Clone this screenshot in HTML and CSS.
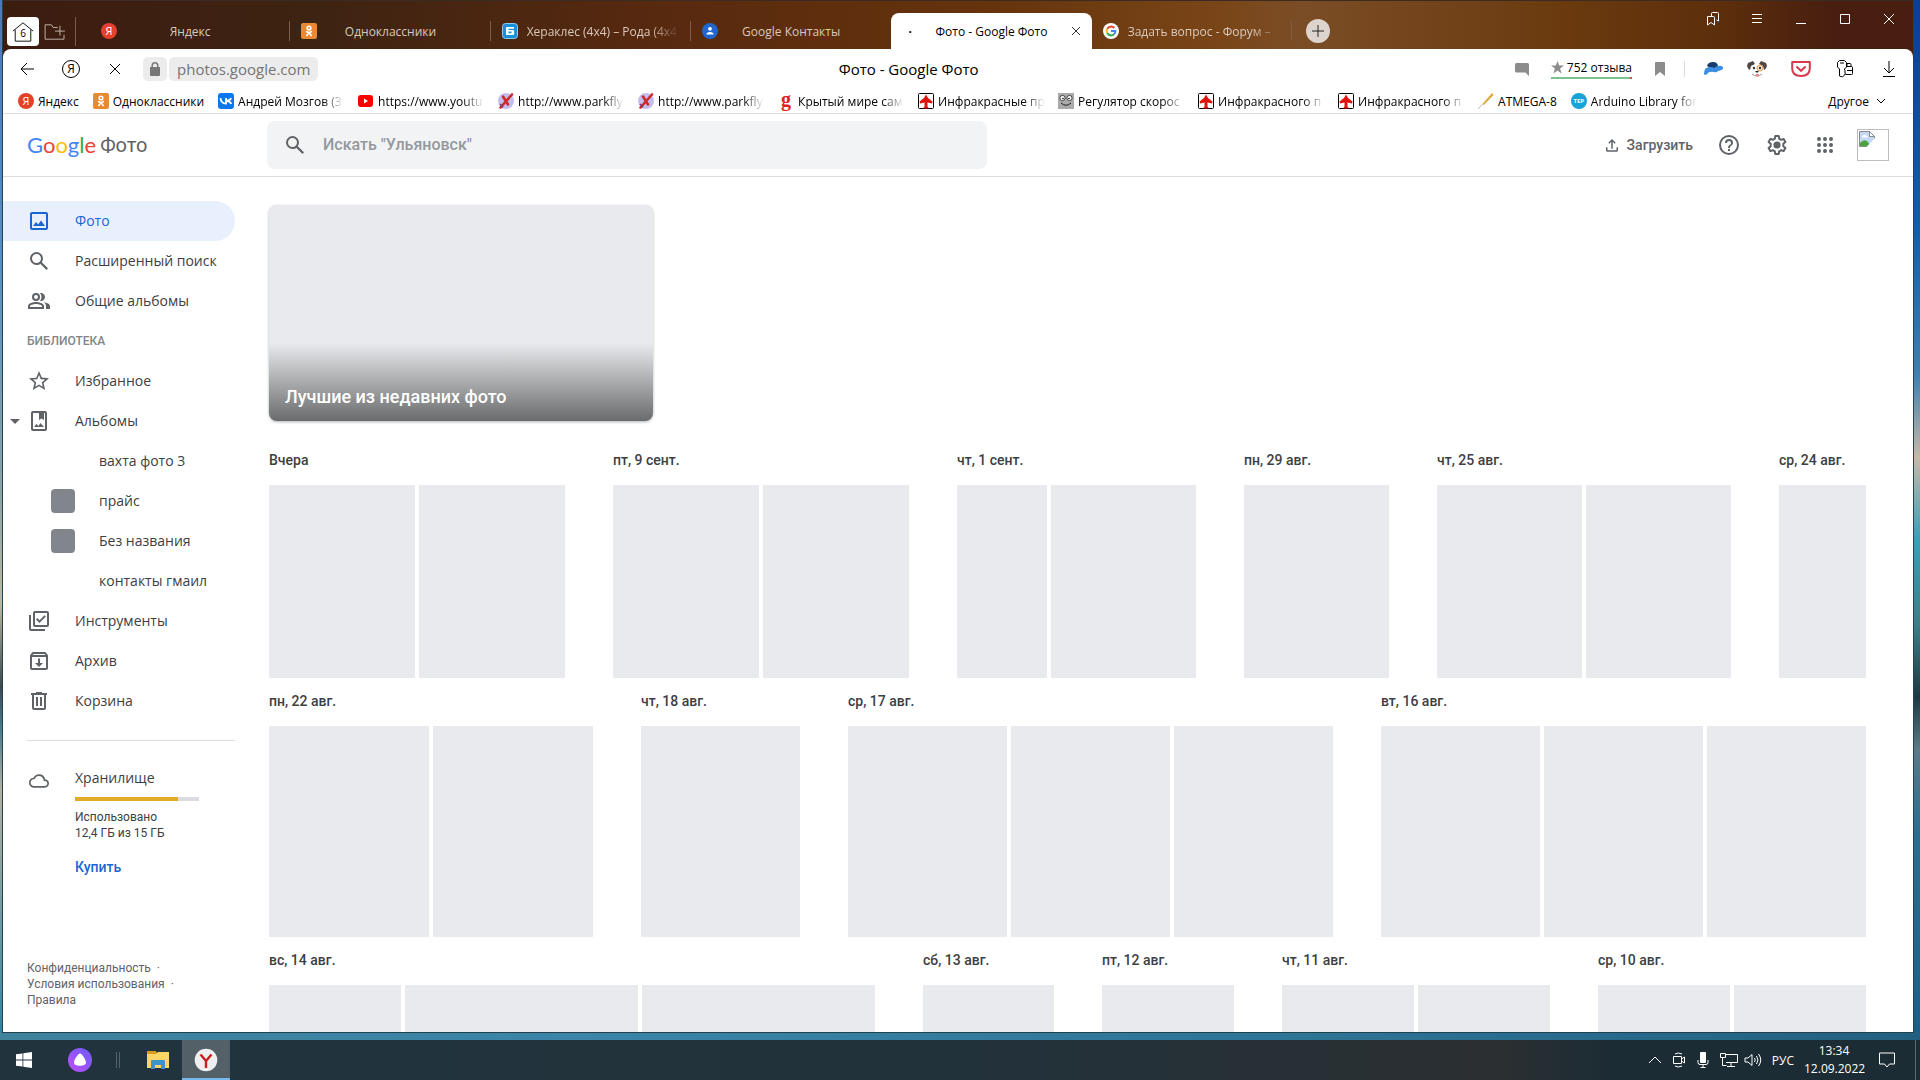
FILE: index.html
```html
<!DOCTYPE html>
<html lang="ru">
<head>
<meta charset="utf-8">
<title>Фото - Google Фото</title>
<link rel="stylesheet" href="styles.css">
</head>
<body>
<svg class="sprite" aria-hidden="true">
  <symbol id="i-search" viewBox="0 0 24 24"><path d="M20.49 19l-5.73-5.73A6.96 6.96 0 0 0 16 9.5 6.5 6.5 0 1 0 9.5 16c1.61 0 3.09-.59 4.23-1.57L19.49 20.2zM5 9.5a4.5 4.5 0 1 1 9 0 4.5 4.5 0 0 1-9 0z"/><path d="M14.3 13.2l6.6 6.4-1.4 1.4-6.5-6.5z"/></symbol>
  <symbol id="i-photo" viewBox="0 0 24 24"><path fill-rule="evenodd" d="M5 3h14a2 2 0 0 1 2 2v14a2 2 0 0 1-2 2H5a2 2 0 0 1-2-2V5c0-1.100.9-2 2-2zm0 2v14h14V5zm1 12l3-4 2.200 2.500L14 11.500 18 17z"/></symbol>
  <symbol id="i-people" viewBox="0 0 24 24"><path fill-rule="evenodd" d="M9 12a4 4 0 1 0 0-8 4 4 0 0 0 0 8zm0-6a2 2 0 1 1 0 4 2 2 0 0 1 0-4zm0 7c-2.670 0-8 1.340-8 4v3h16v-3c0-2.660-5.330-4-8-4zm6 5H3v-1c0-.720 3.220-2 6-2s6 1.280 6 2zM14 4c2.200 0 4 1.800 4 4s-1.800 4-4 4c-.400 0-.700-.050-1-.150A6 6 0 0 0 14.500 8c0-1.500-.550-2.800-1.500-3.850.3-.1.6-.150 1-.150zM17 13.200c2.900.5 6 1.800 6 3.800v3h-4v-3c0-1.500-.8-2.800-2-3.800z"/></symbol>
  <symbol id="i-star" viewBox="0 0 24 24"><path d="M22 9.240l-7.190-.620L12 2 9.190 8.630 2 9.240l5.460 4.730L5.820 21 12 17.270 18.180 21l-1.630-7.030zM12 15.400l-3.760 2.270 1-4.280-3.320-2.880 4.380-.380L12 6.100l1.710 4.040 4.380.380-3.320 2.880 1 4.280z"/></symbol>
  <symbol id="i-album" viewBox="0 0 24 24"><path fill-rule="evenodd" d="M6 2h12a2 2 0 0 1 2 2v16a2 2 0 0 1-2 2H6a2 2 0 0 1-2-2V4c0-1.100.9-2 2-2zm0 2v16h12V4h-1v7l-2.500-1.500L12 11V4zm1 14l2.500-3.200 1.800 2.100 2.200-2.900L17 18z"/></symbol>
  <symbol id="i-tools" viewBox="0 0 24 24"><path fill-rule="evenodd" d="M8 2h12a2 2 0 0 1 2 2v12a2 2 0 0 1-2 2H8a2 2 0 0 1-2-2V4c0-1.100.9-2 2-2zm0 2v12h12V4zM2 6h2v14h14v2H4a2 2 0 0 1-2-2zm10.500 8L9 10.500l1.400-1.400 2.100 2.100 5-5L18.900 7.600z"/></symbol>
  <symbol id="i-archive" viewBox="0 0 24 24"><path fill-rule="evenodd" d="M5.600 3h12.800l2.600 3.200V19a2 2 0 0 1-2 2H5a2 2 0 0 1-2-2V6.200zM6.500 5l-.8 1h12.600l-.8-1zM5 8v11h14V8zm6 1.500h2V14h3l-4 4-4-4h3z"/></symbol>
  <symbol id="i-trash" viewBox="0 0 24 24"><path fill-rule="evenodd" d="M9 3h6v1h5v2h-1v13a2 2 0 0 1-2 2H7a2 2 0 0 1-2-2V6H4V4h5zM7 6v13h10V6zm2 2h2v9H9zm4 0h2v9h-2z"/></symbol>
  <symbol id="i-cloud" viewBox="0 0 24 24"><path d="M19.350 10.040A7.490 7.490 0 0 0 12 4C9.110 4 6.600 5.640 5.350 8.040A5.990 5.990 0 0 0 0 14c0 3.310 2.690 6 6 6h13c2.760 0 5-2.240 5-5 0-2.640-2.050-4.780-4.650-4.960zM19 18H6c-2.210 0-4-1.790-4-4 0-2.050 1.530-3.760 3.560-3.970l1.070-.110.5-.950A5.500 5.500 0 0 1 12 6c2.620 0 4.880 1.860 5.390 4.430l.3 1.500 1.530.110A2.980 2.980 0 0 1 22 15c0 1.650-1.350 3-3 3z"/></symbol>
  <symbol id="i-upload" viewBox="0 0 24 24"><path d="M4 15v4c0 1.100.9 2 2 2h12a2 2 0 0 0 2-2v-4h-2v4H6v-4zM7 9l1.400 1.400L11 7.800V17h2V7.800l2.600 2.600L17 9l-5-5z"/></symbol>
  <symbol id="i-help" viewBox="0 0 24 24"><path d="M11 18h2v-2h-2zm1-16a10 10 0 1 0 0 20 10 10 0 0 0 0-20zm0 18a8 8 0 1 1 0-16 8 8 0 0 1 0 16zm0-14a4 4 0 0 0-4 4h2a2 2 0 1 1 4 0c0 2-3 1.750-3 5h2c0-2.250 3-2.500 3-5a4 4 0 0 0-4-4z"/></symbol>
  <symbol id="i-gear" viewBox="0 0 24 24"><path fill="none" stroke="currentColor" stroke-width="2" stroke-linejoin="round" d="M10.300 3h3.400l.5 2.700 1.900 1.100 2.600-.9 1.700 3-2.100 1.800v2.600l2.100 1.800-1.700 3-2.600-.9-1.900 1.100-.5 2.700h-3.400l-.5-2.700-1.900-1.100-2.600.9-1.700-3 2.100-1.800v-2.600L3.600 8.900l1.700-3 2.600.9 1.900-1.100z"/><circle cx="12" cy="12" r="3.600"/></symbol>
  <symbol id="i-apps" viewBox="0 0 24 24"><path d="M6 8a2 2 0 1 0 0-4 2 2 0 0 0 0 4zm6 12a2 2 0 1 0 0-4 2 2 0 0 0 0 4zm-6 0a2 2 0 1 0 0-4 2 2 0 0 0 0 4zm0-6a2 2 0 1 0 0-4 2 2 0 0 0 0 4zm6 0a2 2 0 1 0 0-4 2 2 0 0 0 0 4zm4-8a2 2 0 1 0 4 0 2 2 0 0 0-4 0zm-4 2a2 2 0 1 0 0-4 2 2 0 0 0 0 4zm6 6a2 2 0 1 0 0-4 2 2 0 0 0 0 4zm0 6a2 2 0 1 0 0-4 2 2 0 0 0 0 4z"/></symbol>
  <symbol id="i-ok" viewBox="0 0 16 16"><rect width="16" height="16" rx="2" fill="#e98a33"/><g fill="none" stroke="#fff" stroke-width="1.600" stroke-linecap="round"><circle cx="8" cy="5" r="1.800"/><path d="M5.600 8.600q2.400 1.600 4.800 0M8 9.600l-2.200 2.900M8 9.600l2.200 2.900"/></g></symbol>
  <symbol id="i-plane" viewBox="0 0 16 16"><circle cx="8" cy="8" r="8" fill="#c4bdf0"/><path d="M14 1.500L2.500 14.500M5 3.500l5 8" fill="none" stroke="#cf2a2a" stroke-width="2.600" stroke-linecap="round"/><path d="M2 11l3 3.500" stroke="#7a3a7a" stroke-width="1.500"/></symbol>
  <symbol id="i-tree" viewBox="0 0 16 16"><rect x=".5" y=".5" width="15" height="15" rx="1" fill="#fff" stroke="#000"/><path d="M8 1.500l2 3.500 4.500 3.500-.5 2-4.500-1v4l1.500 2H5l1.500-2v-4L2 10.500l-.5-2L6 5z" fill="#e0140f"/></symbol>
</svg>

<div class="desktop">
<div class="window">
  <header class="tabstrip">
    <button class="home" aria-label="Вкладки"><svg viewBox="0 0 24 24" class="line"><path d="M1 11L12 2l11 9M3.500 9.500V22h17V9.500"/></svg><span class="home-count">6</span></button>
    <button class="group" aria-label="Новая группа"><svg viewBox="0 0 24 20" class="line"><path d="M15 5H10L8 2H1v16h21v-5M12 9h11M17.500 3v11"/></svg></button>
    <nav class="tabs">
      <a class="tab" href="#"><span class="ya">Я</span><span class="tab-title">Яндекс</span></a>
      <a class="tab" href="#"><svg class="fav"><use href="#i-ok"/></svg><span class="tab-title">Одноклассники</span></a>
      <a class="tab tab-long" href="#"><svg class="fav" viewBox="0 0 16 16"><rect x=".5" y=".5" width="15" height="15" rx="3" fill="#1c8fd6" stroke="#8ccaf0"/><path d="M4 4h8v1.800H6.500v1.200H11q1.200 0 1.200 1.200v2.600Q12.200 12 11 12H4zM6.500 8.600v1.600h3V8.600z" fill="#fff" fill-rule="evenodd"/></svg><span class="tab-title">Хераклес (4х4) – Рода (4х4</span></a>
      <a class="tab" href="#"><svg class="fav" viewBox="0 0 16 16"><circle cx="8" cy="8" r="8" fill="#1f66d0"/><circle cx="8" cy="5.800" r="1.900" fill="#fff"/><path d="M4.400 11.600q0-2.600 3.600-2.600t3.600 2.600z" fill="#fff"/></svg><span class="tab-title">Google Контакты</span></a>
      <a class="tab tab-active" href="#" aria-current="page"><span class="loading">·</span><span class="tab-title">Фото - Google Фото</span><svg class="tab-close line" viewBox="0 0 10 10"><path d="M1 1l8 8M9 1L1 9"/></svg></a>
      <a class="tab tab-long" href="#"><svg class="fav" viewBox="0 0 16 16"><circle cx="8" cy="8" r="8" fill="#fff"/><g fill="none" stroke-width="2"><path stroke="#ea4335" d="M4.200 5.800A4.500 4.500 0 0 1 11.300 5"/><path stroke="#fbbc05" d="M4.200 10.200a4.500 4.500 0 0 1 0-4.400"/><path stroke="#34a853" d="M11 11.300a4.500 4.500 0 0 1-6.800-1.100"/><path stroke="#4285f4" d="M8 8h4.400q0 2-1.400 3.300"/></g></svg><span class="tab-title">Задать вопрос - Форум –</span></a>
    </nav>
    <button class="newtab" aria-label="Новая вкладка"><svg viewBox="0 0 12 12" class="line"><path d="M6 0v12M0 6h12"/></svg></button>
    <div class="controls">
      <button aria-label="Коллекции"><svg viewBox="0 0 14 14" class="line"><path d="M1.500 4.500h6q1 0 1 1V13L5 10.500 1.500 13zM5.500 4V1.500q0-1 1-1h5q1 0 1 1V9L10.500 8"/></svg></button>
      <button aria-label="Меню"><svg viewBox="0 0 14 14" class="line"><path d="M2 2.500h10M2 6.500h10M2 10.500h10"/></svg></button>
      <button aria-label="Свернуть"><svg viewBox="0 0 14 14" class="line"><path d="M2 11.500h10"/></svg></button>
      <button aria-label="Развернуть"><svg viewBox="0 0 14 14" class="line"><path d="M2.500 2.500h9v9h-9z"/></svg></button>
      <button aria-label="Закрыть"><svg viewBox="0 0 14 14" class="line"><path d="M2 2l10 10M12 2L2 12"/></svg></button>
    </div>
  </header>

  <div class="browser">
  <div class="toolbar">
    <div class="tool-left">
      <button class="tool" aria-label="Назад"><svg viewBox="0 0 16 16" class="line"><path d="M15 8H2M8 2L2 8l6 6"/></svg></button>
      <button class="tool" aria-label="Яндекс"><span class="ya-ring">Я</span></button>
      <button class="tool" aria-label="Остановить"><svg viewBox="0 0 16 16" class="line"><path d="M3 3l10 10M13 3L3 13"/></svg></button>
      <button class="lock" aria-label="Защита"><svg viewBox="0 0 16 16"><path fill="#777" fill-rule="evenodd" d="M4.500 6V4.500a3.500 3.500 0 0 1 7 0V6H13v8q0 1-1 1H4q-1 0-1-1V6zM6 6h4V4.500a2 2 0 0 0-4 0z"/></svg></button>
      <button class="url">photos.google.com</button>
    </div>
    <div class="page-title">Фото - Google Фото</div>
    <div class="tool-right">
      <svg class="chat" viewBox="0 0 14 14"><path fill="#8c8c8c" d="M1.500 1h11Q14 1 14 2.500V14l-3.500-3.500h-9Q0 10.500 0 9V2.500Q0 1 1.500 1z"/></svg>
      <a class="reviews" href="#"><svg viewBox="0 0 12 12"><path fill="#8c8c8c" d="M6 0l1.500 4.200H12L8.400 6.900 9.700 11.500 6 8.700 2.300 11.500 3.600 6.900 0 4.200h4.500z"/></svg>752 отзыва</a>
      <svg class="mark" viewBox="0 0 12 16"><path fill="#8c8c8c" d="M2 1h8q1 0 1 1v13l-5-4-5 4V2q0-1 1-1z"/></svg>
      <span class="tool-sep"></span>
      <button class="tool" aria-label="Погода"><svg viewBox="0 0 20 16"><path d="M4 5q1-4 6-4t5 5l-4 3z" fill="#173d6b"/><path d="M1 13q0-8 7-7 2 0 3 1 5-4 9-1v2q-3 2-5 2-1 2-4 1-5-1-7 2-2 2-3 0z" fill="#3d8de0"/></svg></button>
      <button class="tool" aria-label="Пёс"><svg viewBox="0 0 20 16"><path d="M1 2l5-2 2 3-4 2-1 4Q1 8 0 5zM19 2l-5-2-2 3 4 2 1 4q2-1 3-4z" fill="#4d4643"/><circle cx="13" cy="7" r="3" fill="#fbe6cc" stroke="#e09c53"/><circle cx="7" cy="7" r="1.200" fill="#333"/><circle cx="13" cy="7" r="1.200" fill="#333"/><path d="M8 10h4l-2 2z" fill="#222"/><path d="M5 13q5 4 10 0" fill="none" stroke="#999"/><path d="M9 13h3v2q-1.500 1.500-3 0z" fill="#e88"/></svg></button>
      <button class="tool" aria-label="Pocket"><svg viewBox="0 0 20 16"><path d="M1.200 1h17.600v6.500q0 7.500-8.800 7.500T1.200 7.500z" fill="#fff" stroke="#d7394f" stroke-width="2" stroke-linejoin="round"/><path d="M6 6l4 3.800L14 6" fill="none" stroke="#d7394f" stroke-width="2" stroke-linecap="round"/></svg></button>
      <button class="tool" aria-label="Пароли"><svg viewBox="0 0 18 18" class="line keys"><path d="M3.500 16V9L1.500 7V2.500l2-2h5l2 2V7L8.500 9v1l1 1-1 1 1 1-1 2-2 2zM4 3h4M10.500 6.500h5q1 0 1 1v6q0 1-1 1h-6M11 6v-2.500h3q1 0 1 1V6M11 10.500h5"/></svg></button>
      <button class="tool" aria-label="Загрузки"><svg viewBox="0 0 16 16" class="line"><path d="M8 0v12M3 7l5 5 5-5M2 15.500h12"/></svg></button>
    </div>
  </div>

  <nav class="bookmarks">
    <a href="#"><span class="ya">Я</span><span>Яндекс</span></a>
    <a href="#"><svg class="fav"><use href="#i-ok"/></svg><span>Одноклассники</span></a>
    <a class="clip" href="#"><svg class="fav" viewBox="0 0 16 16"><rect width="16" height="16" rx="3" fill="#0a77ee"/><path fill="none" stroke="#fff" stroke-width="1.800" d="M2.500 5q.5 5.500 5.500 5.500V5M13 5q-.5 2.500-5 2.800 4 .2 5.300 3"/></svg><span>Андрей Мозгов (3</span></a>
    <a class="clip" href="#"><svg class="fav" viewBox="0 0 16 16"><rect y="2" width="15" height="12" rx="3" fill="#f00"/><path d="M6 5.500v5L10 8z" fill="#fff"/></svg><span>https://www.youtu</span></a>
    <a class="clip" href="#"><svg class="fav"><use href="#i-plane"/></svg><span>http://www.parkfly</span></a>
    <a class="clip" href="#"><svg class="fav"><use href="#i-plane"/></svg><span>http://www.parkfly</span></a>
    <a class="clip" href="#"><span class="fav fav-g">g</span><span>Крытый мире сам</span></a>
    <a class="clip" href="#"><svg class="fav"><use href="#i-tree"/></svg><span>Инфракрасные пр</span></a>
    <a class="clip" href="#"><svg class="fav" viewBox="0 0 16 16"><rect width="16" height="16" fill="#aaa"/><g fill="#fff" stroke="#222" stroke-width=".8"><circle cx="4.500" cy="5" r="2.600"/><circle cx="11.500" cy="5" r="2.600"/></g><circle cx="5" cy="5.500" r=".8"/><circle cx="11" cy="5.500" r=".8"/><path d="M3 10q5 4.500 10 0" fill="none" stroke="#222"/></svg><span>Регулятор скорос</span></a>
    <a class="clip" href="#"><svg class="fav"><use href="#i-tree"/></svg><span>Инфракрасного п</span></a>
    <a class="clip" href="#"><svg class="fav"><use href="#i-tree"/></svg><span>Инфракрасного п</span></a>
    <a href="#"><svg class="fav" viewBox="0 0 16 16"><path d="M14 0l1.500 2L6 12l-1.500-1z" fill="#e0a73c"/><path d="M5 10.500L0 16" stroke="#bbb"/></svg><span>ATMEGA-8</span></a>
    <a class="clip" href="#"><span class="fav fav-tep">TEP</span><span>Arduino Library for</span></a>
    <button class="other">Другое<svg viewBox="0 0 8 8" class="line"><path d="M0 2l4 4 4-4"/></svg></button>
  </nav>

  <div class="appbar">
    <a class="logo" href="#"><span class="google"><span class="c-b">G</span><span class="c-r">o</span><span class="c-y">o</span><span class="c-b">g</span><span class="c-g">l</span><span class="c-r">e</span></span><span class="product">Фото</span></a>
    <label class="search"><svg class="icon"><use href="#i-search"/></svg><input type="text" aria-label="Поиск" placeholder='Искать "Ульяновск"'></label>
    <div class="actions">
      <button class="upload"><svg><use href="#i-upload"/></svg>Загрузить</button>
      <button class="act" aria-label="Справка"><svg class="icon"><use href="#i-help"/></svg></button>
      <button class="act" aria-label="Настройки"><svg class="icon"><use href="#i-gear"/></svg></button>
      <button class="act" aria-label="Приложения"><svg class="icon"><use href="#i-apps"/></svg></button>
      <a class="avatar" href="#" aria-label="Аккаунт"><svg viewBox="0 0 16 16"><path d="M.5.500h10l5 5v10H.5z" fill="#c2d9f5" stroke="#8c8c8c"/><path d="M10.500.500v5h5z" fill="#fff" stroke="#8c8c8c"/><path d="M3 6q0-2 2-2 2-1 2.500 1Q9 5 9 6.500H3z" fill="#fff"/><path d="M1 15v-3q4-5 8-1l2 4z" fill="#4aa53c"/><path d="M16 7L7.500 16H16z" fill="#fff"/></svg></a>
    </div>
  </div>

  <div class="content">
    <aside class="sidebar">
      <nav class="side-nav">
        <a class="side side-on" href="#"><svg class="icon"><use href="#i-photo"/></svg>Фото</a>
        <a class="side" href="#"><svg class="icon"><use href="#i-search"/></svg>Расширенный поиск</a>
        <a class="side" href="#"><svg class="icon"><use href="#i-people"/></svg>Общие альбомы</a>
        <h2 class="side-head">Библиотека</h2>
        <a class="side" href="#"><svg class="icon"><use href="#i-star"/></svg>Избранное</a>
        <a class="side side-open" href="#"><svg class="icon"><use href="#i-album"/></svg>Альбомы</a>
        <a class="side side-sub" href="#"><span class="thumb thumb-none"></span>вахта фото 3</a>
        <a class="side side-sub" href="#"><span class="thumb"></span>прайс</a>
        <a class="side side-sub" href="#"><span class="thumb"></span>Без названия</a>
        <a class="side side-sub" href="#"><span class="thumb thumb-none"></span>контакты гмаил</a>
        <a class="side" href="#"><svg class="icon"><use href="#i-tools"/></svg>Инструменты</a>
        <a class="side" href="#"><svg class="icon"><use href="#i-archive"/></svg>Архив</a>
        <a class="side" href="#"><svg class="icon"><use href="#i-trash"/></svg>Корзина</a>
      </nav>
      <div class="storage">
        <svg class="icon cloud"><use href="#i-cloud"/></svg>
        <div class="storage-body">
          <div class="storage-title">Хранилище</div>
          <div class="bar"><div class="bar-fill" style="width:83%"></div></div>
          <div class="storage-used">Использовано<br>12,4 ГБ из 15 ГБ</div>
          <a class="buy" href="#">Купить</a>
        </div>
      </div>
      <footer class="legal"><a href="#">Конфиденциальность</a> &nbsp;·<br><a href="#">Условия использования</a> &nbsp;·<br><a href="#">Правила</a></footer>
    </aside>

    <main class="photos">
      <a class="memory" href="#"><span>Лучшие из недавних фото</span></a>
      <div class="row">
        <section class="day" style="flex-grow:296"><h3>Вчера</h3><div class="tiles"><i></i><i></i></div></section>
        <section class="day" style="flex-grow:296"><h3>пт, 9 сент.</h3><div class="tiles"><i></i><i></i></div></section>
        <section class="day" style="flex-grow:239"><h3>чт, 1 сент.</h3><div class="tiles"><i style="flex-grow:90"></i><i style="flex-grow:145"></i></div></section>
        <section class="day" style="flex-grow:145"><h3>пн, 29 авг.</h3><div class="tiles"><i></i></div></section>
        <section class="day" style="flex-grow:294"><h3>чт, 25 авг.</h3><div class="tiles"><i></i><i></i></div></section>
        <section class="day" style="flex-grow:87"><h3>ср, 24 авг.</h3><div class="tiles"><i></i></div></section>
      </div>
      <div class="row row-tall">
        <section class="day" style="flex-grow:324"><h3>пн, 22 авг.</h3><div class="tiles"><i></i><i></i></div></section>
        <section class="day" style="flex-grow:159"><h3>чт, 18 авг.</h3><div class="tiles"><i></i></div></section>
        <section class="day" style="flex-grow:485"><h3>ср, 17 авг.</h3><div class="tiles"><i></i><i></i><i></i></div></section>
        <section class="day" style="flex-grow:485"><h3>вт, 16 авг.</h3><div class="tiles"><i></i><i></i><i></i></div></section>
      </div>
      <div class="row">
        <section class="day" style="flex-grow:606"><h3>вс, 14 авг.</h3><div class="tiles"><i style="flex-grow:132"></i><i style="flex-grow:233"></i><i style="flex-grow:233"></i></div></section>
        <section class="day" style="flex-grow:131"><h3>сб, 13 авг.</h3><div class="tiles"><i></i></div></section>
        <section class="day" style="flex-grow:132"><h3>пт, 12 авг.</h3><div class="tiles"><i></i></div></section>
        <section class="day" style="flex-grow:268"><h3>чт, 11 авг.</h3><div class="tiles"><i></i><i></i></div></section>
        <section class="day" style="flex-grow:268"><h3>ср, 10 авг.</h3><div class="tiles"><i></i><i></i></div></section>
      </div>
    </main>
  </div>
  </div>
</div>
</div>

<footer class="taskbar">
  <button class="task" aria-label="Пуск"><svg viewBox="0 0 16 16" class="t16"><path fill="#fff" d="M0 2.300L6.500 1.400v6.200H0zM7.300 1.300L16 0v7.600H7.300zM0 8.400h6.500v6.200L0 13.700zM7.300 8.400H16V16l-8.700-1.300z"/></svg></button>
  <button class="task task-alice" aria-label="Алиса"><svg viewBox="0 0 24 24" class="t24"><defs><linearGradient id="alice" x1="1" y1="0" x2="0" y2="1"><stop offset="0" stop-color="#6a5cff"/><stop offset="1" stop-color="#c04df5"/></linearGradient></defs><circle cx="12" cy="12" r="12" fill="url(#alice)"/><path d="M12 5.500c2 0 6 6.500 6 9 0 2-2.500 3.300-6 3.300s-6-1.300-6-3.300c0-2.500 4-9 6-9z" fill="#fff"/></svg></button>
  <span class="task-sep"></span>
  <button class="task" aria-label="Проводник"><svg viewBox="0 0 22 18" class="t22"><path fill="#d99b1c" d="M0 0h9l1 2v4H0z"/><path fill="#fbd667" d="M0 3h9l2-2h11v16H0z"/><path fill="#3d94c9" d="M4 18V10q0-1 1-1h12q1 0 1 1v8h-4v-4H8v4z"/></svg></button>
  <button class="task task-on" aria-label="Яндекс Браузер"><svg viewBox="0 0 24 24" class="t24"><circle cx="12" cy="12" r="11.300" fill="#efefef"/><path d="M6.500 6.500l5.500 6.500 5.500-6.500M12 12.500V20" fill="none" stroke="#c8201c" stroke-width="2.400"/></svg></button>
  <div class="tray">
    <svg viewBox="0 0 14 14" class="line"><path d="M1 10l6-6 6 6"/></svg>
    <svg viewBox="0 0 14 16" class="line"><path d="M1.500 4.500h8v7h-8zM9.500 7l3-2v6l-3-2M3 2q3-2 7 0M3 14q3 2 7 0"/></svg>
    <svg viewBox="0 0 14 16" class="line"><rect x="4" y="0" width="6" height="11" rx="1" fill="#fff" stroke="none"/><path d="M2 8v2.500q0 2 2 2h6q2 0 2-2V8M7 12.500V15M4.500 15.500h5"/></svg>
    <svg viewBox="0 0 18 16" class="line wide"><path d="M5 2.500h12.500v8H6M11 10.500v4M7 14.500h8M.5 1.500h5v4h-5zM2.500 5.500v8h4"/></svg>
    <svg viewBox="0 0 18 16" class="line wide"><path d="M1 6v4h3l4 3.500v-11L4 6zM10.500 6q1.500 2 0 4M12.500 4q3 4 0 8M14.500 2q4.500 6 0 12"/></svg>
    <span class="lang">РУС</span>
    <time class="clock">13:34<br>12.09.2022</time>
    <svg viewBox="0 0 18 16" class="line note"><path d="M1.500 1h15v11h-5L9 15l-2.500-3h-5z"/></svg>
  </div>
</footer>
</body>
</html>
```
FILE: styles.css
```css
* { box-sizing: border-box; }
html, body { margin: 0; height: 100%; }
body {
  display: flex;
  flex-direction: column;
  height: 100vh;
  overflow: hidden;
  font-family: "Open Sans", "Noto Sans", sans-serif;
  font-size: 12px;
  color: #000;
}
a { color: inherit; text-decoration: none; }
button { border: 0; padding: 0; margin: 0; background: none; color: inherit; font: inherit; }
h2, h3 { margin: 0; }
svg { display: block; flex: none; }
.sprite { position: absolute; width: 0; height: 0; }
.line { fill: none; stroke: currentColor; stroke-width: 1; }
.icon { width: 24px; height: 24px; fill: currentColor; }
.fav { width: 16px; height: 16px; flex: none; }

.desktop {
  flex: 1;
  min-height: 0;
  display: flex;
  padding: 0 6px 7px 2px;
  background:
    linear-gradient(90deg, #3f829c, #3a85a8 30%, #2c7394 70%, #235f80) bottom / 100% 8px no-repeat,
    linear-gradient(#4a7ab5 0%, #5a8fc0 25%, #8fa5a5 48%, #c0b8a0 58%, #3c4a50 66%, #4d7a8c 70%, #b4b0a0 76%, #4f8ea0 95%, #2f7ea0 100%) left / 50% 100% no-repeat,
    linear-gradient(#0a3c9c 0%, #0f5fae 22%, #3d80b0 36%, #c8b8a8 44%, #35a0b8 52%, #3c7f88 60%, #1c3844 67%, #5a7a88 72%, #2c6e92 80%, #175f88 100%) right / 50% 100% no-repeat;
}
.window {
  flex: 1;
  min-width: 0;
  display: flex;
  flex-direction: column;
  border: 1px solid #22424f;
  border-top: 0;
  background: linear-gradient(90deg, #3d1c10 0%, #3d2312 16%, #57290f 34%, #66330c 52%, #7a4618 64%, #7b4d26 68%, #6a3a0e 82%, #5c2e0c 90%, #471e10 96%) top / 100% 60px no-repeat, #fff;
}

/* tab strip */
.tabstrip { display: flex; align-items: flex-start; height: 49px; padding-left: 4px; border-top: 1px solid #3a2c22; }
.home { display: grid; place-items: center; width: 32px; height: 29px; margin-top: 16px; border-radius: 4px; background: #fff; color: #000; }
.home > * { grid-area: 1 / 1; }
.home svg { width: 24px; height: 22px; }
.home-count { font-size: 10px; padding-top: 2px; }
.group { width: 37px; height: 29px; margin-top: 16px; padding-left: 5px; border-right: 1px solid #7c5d4c; color: #c9bcb2; }
.group svg { width: 22px; height: 18px; }
.tabs { display: flex; flex: 0 1 1216px; min-width: 0; margin-top: 12px; padding-left: 14px; }
.tab {
  flex: 1;
  min-width: 0;
  display: grid;
  grid-template-columns: 16px 1fr 16px;
  align-items: center;
  gap: 9px;
  height: 36px;
  padding: 0 11px;
  color: #d9c9bc;
  background: linear-gradient(#7c5d4c, #7c5d4c) right 8px / 1px 20px no-repeat;
}
.tab:nth-child(4) { background: none; }
.tab-long { grid-template-columns: 16px 1fr; }
.tab-title { text-align: center; white-space: nowrap; }
.tab-long .tab-title, .clip span:last-child {
  text-align: left;
  -webkit-mask-image: linear-gradient(90deg, #000 80%, transparent);
  mask-image: linear-gradient(90deg, #000 80%, transparent);
}
.tab-active { background: #fff; color: #000; border-radius: 8px 8px 0 0; }
.loading { text-align: center; font-weight: 700; }
.tab-close { width: 10px; height: 10px; justify-self: end; color: #333; }
.ya, .fav-tep {
  display: grid;
  place-items: center;
  flex: none;
  width: 16px;
  height: 16px;
  border-radius: 50%;
  background: #e5402a;
  color: #fff;
  font-size: 11px;
  line-height: 16px;
}
.newtab { display: grid; place-items: center; width: 24px; height: 24px; margin: 18px 0 0 14px; border-radius: 50%; background: #ddd5cd; color: #222; }
.newtab svg { width: 12px; height: 12px; }
.controls { display: flex; margin-left: auto; padding-right: 2px; color: #fff; }
.controls button { display: grid; place-items: center; width: 44px; height: 36px; }
.controls svg { width: 14px; height: 14px; }

/* address bar */
.browser { flex: 1; min-height: 0; display: flex; flex-direction: column; background: #fff; border-radius: 8px 8px 0 0; }
.toolbar { display: flex; align-items: center; justify-content: space-between; height: 40px; padding: 0 2px; }
.tool-left, .tool-right { display: flex; align-items: center; }
.tool { display: grid; place-items: center; width: 44px; height: 32px; }
.tool svg { width: 20px; height: 16px; }
.tool .keys { width: 18px; height: 18px; }
.ya-ring { display: grid; place-items: center; width: 18px; height: 18px; border: 1px solid #000; border-radius: 50%; font-size: 12px; line-height: 16px; }
.lock { display: grid; place-items: center; width: 24px; height: 24px; margin-left: 6px; border-radius: 5px; background: #ececec; }
.lock svg { width: 16px; height: 16px; }
.url { height: 24px; margin-left: 2px; padding: 0 8px; border-radius: 5px; background: #ececec; color: #757575; font-size: 15px; line-height: 24px; }
.page-title { margin-right: 16px; font-size: 15px; }
.chat { width: 14px; height: 14px; margin-right: 22px; }
.reviews { display: flex; align-items: center; gap: 3px; padding-bottom: 1px; margin-right: 22px; border-bottom: 2px solid #7dc191; border-image: linear-gradient(90deg, #7dc191 96%, #d8504e 96%) 1; }
.reviews svg { width: 13px; height: 13px; }
.mark { width: 12px; height: 16px; }
.tool-sep { width: 1px; height: 16px; margin: 0 6px 0 18px; background: #dcdcdc; }

/* bookmarks */
.bookmarks { display: flex; align-items: center; gap: 14px; height: 25px; padding: 0 28px 0 15px; border-bottom: 1px solid #dfdfdf; white-space: nowrap; }
.bookmarks a { display: flex; align-items: center; gap: 4px; flex: none; }
.bookmarks .clip { width: 126px; }
.clip span:last-child { flex: 1; }
.fav-g { color: #d22; font: 700 20px/12px "Liberation Serif", serif; text-align: center; }
.fav-tep { background: #16a3d8; font-size: 6px; font-weight: 700; }
.other { display: flex; align-items: center; gap: 8px; margin-left: auto; }
.other svg { width: 8px; height: 8px; }

/* Google header */
.appbar { display: flex; align-items: center; height: 63px; padding: 0 24px; border-bottom: 1px solid #dadce0; color: #5f6368; font-family: Roboto, sans-serif; }
.logo { display: flex; gap: 4px; width: 240px; flex: none; font: 22px/28px Lato, sans-serif; }
.product { font-size: 20px; font-family: Roboto, sans-serif; }
.c-b { color: #4285f4; } .c-r { color: #ea4335; } .c-y { color: #fbbc05; } .c-g { color: #34a853; }
.search { display: flex; align-items: center; gap: 16px; flex: 0 1 720px; height: 48px; padding: 0 16px; border-radius: 8px; background: #f1f3f4; }
.search input { flex: 1; min-width: 0; border: 0; padding: 0; outline: 0; background: none; font: 500 16px/24px Roboto, sans-serif; }
.search input::placeholder { color: #94989d; opacity: 1; }
.actions { display: flex; align-items: center; margin-left: auto; }
.upload { display: flex; align-items: center; gap: 6px; margin-right: 12px; font: 500 14px/20px Roboto, sans-serif; }
.upload svg { width: 18px; height: 18px; fill: currentColor; }
.act { display: grid; place-items: center; width: 48px; height: 48px; }
.avatar { width: 32px; height: 32px; margin-left: 8px; padding: 1px; border: 1px solid #bdbdbd; }
.avatar svg { width: 16px; height: 16px; }

/* sidebar */
.content { flex: 1; min-height: 0; display: flex; overflow: hidden; }
.sidebar { display: flex; flex-direction: column; width: 232px; flex: none; padding: 24px 0; color: #3c4043; font-family: Roboto, sans-serif; }
.side { display: flex; align-items: center; gap: 24px; height: 40px; padding-left: 24px; font: 500 14px/20px "Open Sans", sans-serif; white-space: nowrap; }
.side .icon, .cloud { color: #5f6368; }
.side-on { border-radius: 0 20px 20px 0; background: #e8f0fe; color: #1967d2; }
.side-on .icon { color: #1967d2; }
.side-head { padding-left: 24px; font: 500 12px/40px Roboto, sans-serif; text-transform: uppercase; color: #80868b; }
.side-open { padding-left: 7px; }
.side-open::before { content: ""; margin-right: -17px; border: 5px solid transparent; border-top-color: #5f6368; border-bottom: 0; }
.side-sub { padding-left: 48px; }
.thumb { width: 24px; height: 24px; border-radius: 4px; background: #80868b; }
.thumb-none { background: none; }
.storage { display: flex; gap: 24px; margin: 19px 0 0 24px; padding-top: 27px; border-top: 1px solid #dadce0; }
.storage-title { font: 500 14px/20px "Open Sans", sans-serif; }
.cloud { width: 20px; height: 20px; margin: 3px 2px 0; }
.storage-body { flex: 1; }
.bar { width: 124px; height: 4px; margin: 9px 0 8px; background: #dadce0; }
.bar-fill { height: 4px; background: #e2ab28; }
.storage-used { font-size: 12px; line-height: 16px; }
.buy { display: block; margin-top: 16px; color: #1967d2; font-size: 14px; font-weight: 500; line-height: 20px; }
.legal { margin-top: auto; padding-left: 24px; font-size: 12px; line-height: 16px; color: #5f6368; }

/* photo grid */
.photos { flex: 1; min-width: 0; padding: 28px 47px 0 34px; overflow: hidden; font-family: Roboto, sans-serif; }
.memory { display: flex; align-items: flex-end; width: 384px; height: 216px; margin-bottom: 16px; padding: 0 16px 12px; border-radius: 8px; background: linear-gradient(transparent 64%, rgba(0, 0, 0, .54)) #e8eaed; box-shadow: 0 1px 3px rgba(60, 64, 67, .4); color: #fff; font: 500 18px/24px Roboto, sans-serif; }
.row { display: flex; gap: 48px; }
.day { flex: 1 1 0; min-width: 0; }
.day h3 { margin-bottom: 2px; font-size: 14px; line-height: 46px; font-weight: 500; color: #3c4043; white-space: nowrap; }
.tiles { display: flex; gap: 4px; height: 193px; }
.row-tall .tiles { height: 211px; }
.tiles i { flex: 1 1 0; background: #e8eaed; }

/* taskbar */
.taskbar { display: flex; align-items: stretch; height: 40px; flex: none; background: linear-gradient(90deg, #21343d, #22323b 50%, #2b2f32 78%, #1c2c34 84%); color: #fff; }
.task { display: grid; place-items: center; width: 48px; }
.task-alice { width: 64px; }
.task-on { background: linear-gradient(#76b9ed, #76b9ed) bottom / 100% 2px no-repeat, #536068; }
.task-sep { width: 4px; height: 16px; margin: 12px 14px 0 4px; border: 1px solid #55646c; border-width: 0 1px; }
.t16 { width: 16px; height: 16px; }
.t22 { width: 22px; height: 18px; }
.t24 { width: 24px; height: 24px; }
.tray { display: flex; align-items: center; gap: 10px; margin-left: auto; margin-right: 4px; padding-right: 19px; border-right: 1px solid #5c686e; }
.tray svg { width: 14px; height: 16px; }
.tray .wide, .tray .note { width: 18px; }
.wide + .wide { margin-left: -4px; }
.clock { width: 60px; margin-right: 4px; text-align: center; line-height: 18px; white-space: nowrap; }
```
